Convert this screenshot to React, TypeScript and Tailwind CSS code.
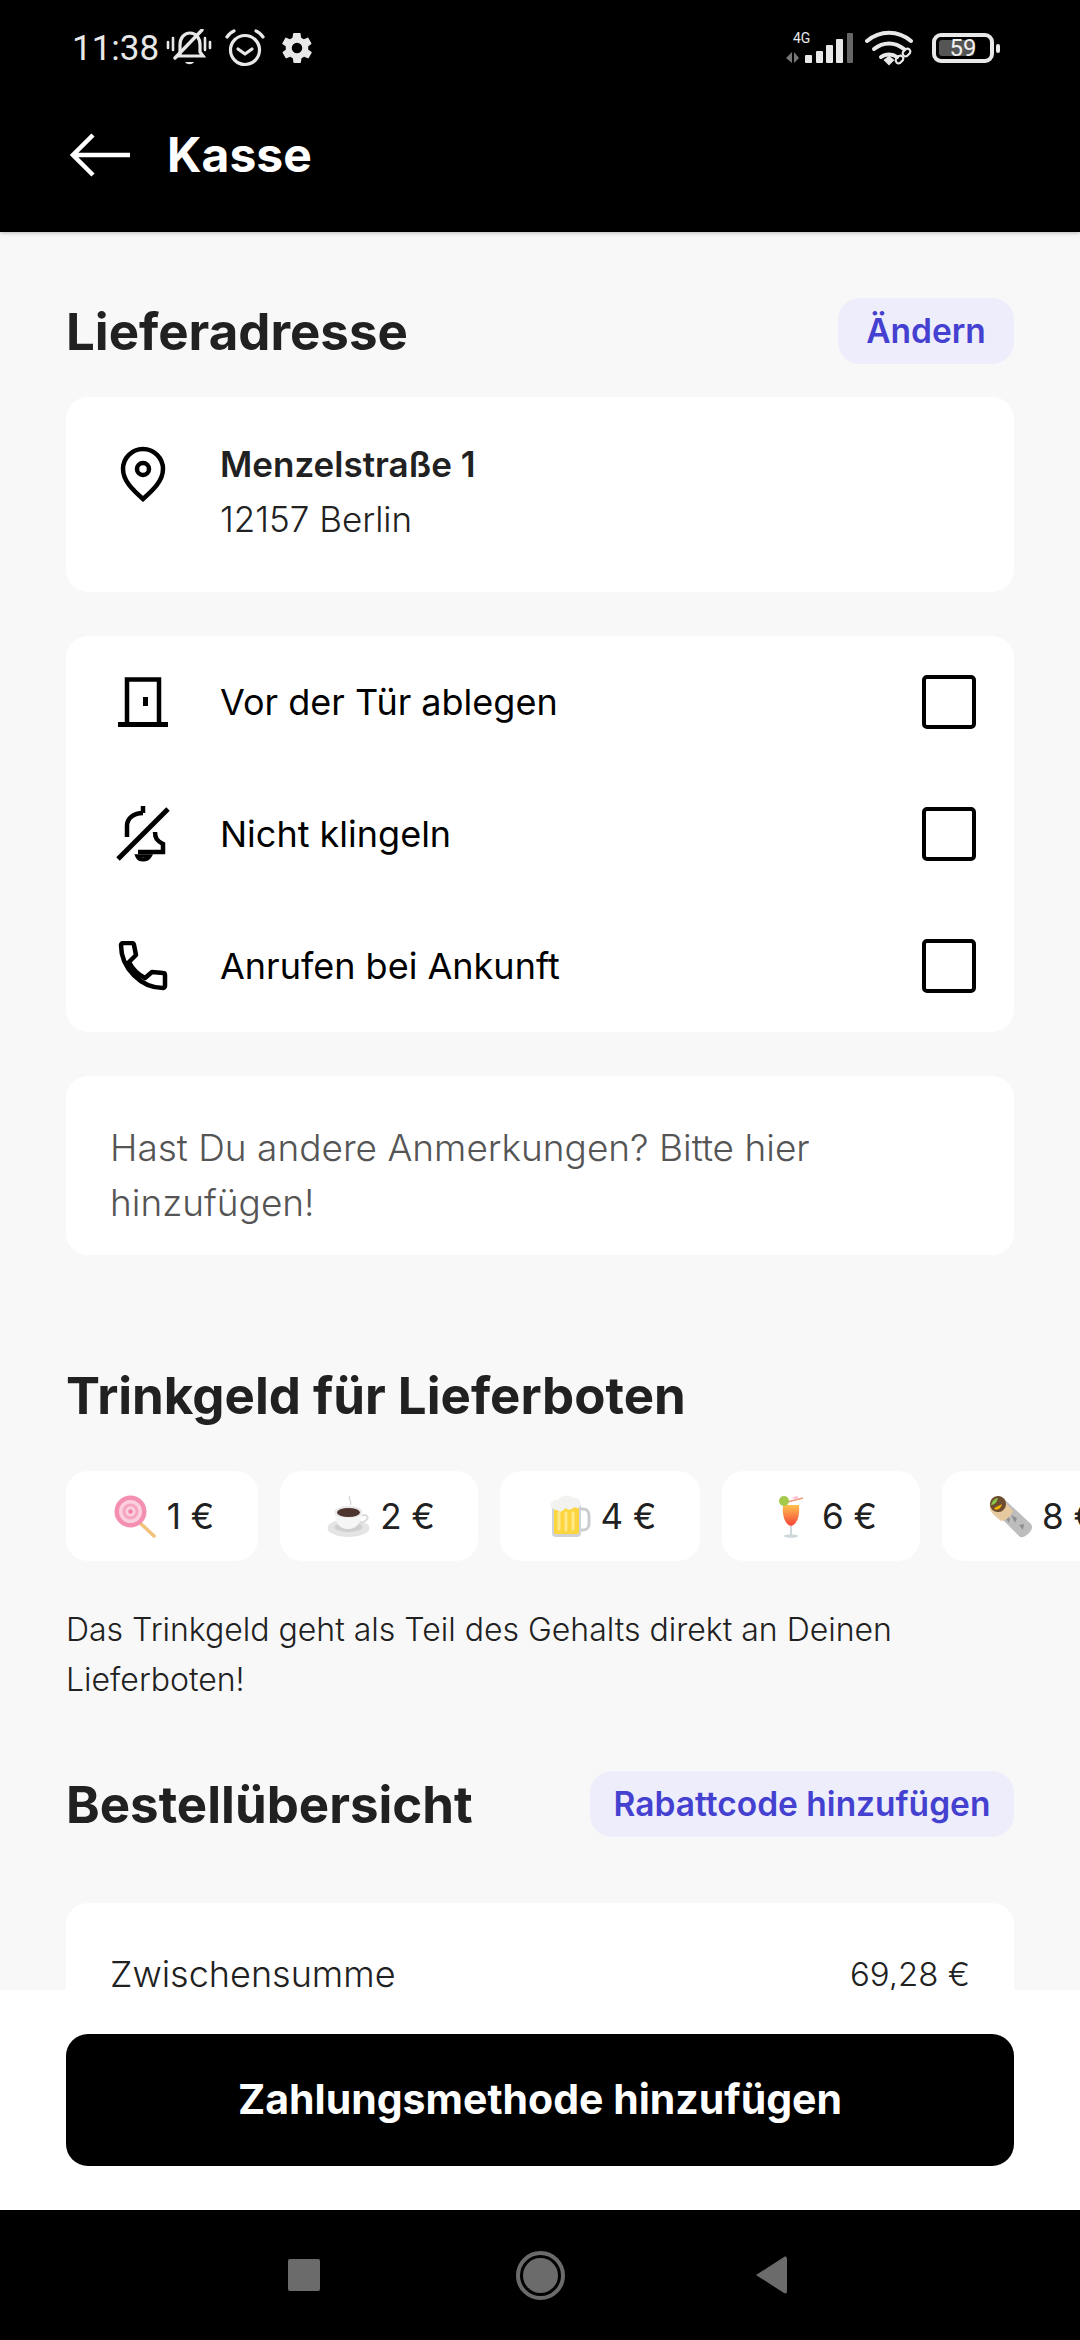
import type { ReactNode } from 'react'

function StatusBar() {
  return (
    <div className="h-[96px] flex items-center justify-between pl-[72px] pr-[80px] font-['Roboto',sans-serif] text-[#e8e8e8]">
      <div className="flex items-center">
        <span className="text-[35px] leading-none">11:38</span>
        <svg className="ml-[7px]" width="46" height="38" viewBox="0 0 46 38" fill="none" stroke="#e8e8e8" strokeWidth="3.2" strokeLinecap="round">
          <path d="M14 26V16c0-7 4-12 10-12s10 5 10 12v7l3 4H12" />
          <path d="M9 29 36 1" strokeWidth="3.4" />
          <path d="M19 33c2 3 7 3 9 0z" fill="#e8e8e8" stroke="none" />
          <path d="M2 13v6M7 9v12M39 9v12M44 13v6" strokeWidth="2.6" />
        </svg>
        <svg className="ml-[13px]" width="40" height="38" viewBox="0 0 40 38" fill="none" stroke="#e8e8e8" strokeWidth="3.2" strokeLinecap="round" strokeLinejoin="round">
          <circle cx="20" cy="21" r="14.5" />
          <path d="M13 20l7 5 7-5" />
          <path d="M2 8c2-3 4-5 7-6M38 8c-2-3-4-5-7-6" />
        </svg>
        <svg className="ml-[14px]" width="36" height="36" viewBox="0 0 24 24" fill="#e8e8e8">
          <path fillRule="evenodd" d="M19.4 13c.1-.3.1-.7.1-1s0-.7-.1-1l2.100-1.600c.2-.2.2-.4.1-.6l-2-3.500c-.1-.2-.4-.3-.6-.2l-2.500 1c-.5-.4-1.100-.7-1.700-1l-.4-2.600c0-.3-.2-.5-.5-.5h-4c-.3 0-.5.2-.5.5l-.4 2.600c-.6.300-1.200.600-1.700 1l-2.500-1c-.2-.1-.5 0-.6.2l-2 3.500c-.1.200-.1.500.1.600L4.600 11c-.1.300-.1.700-.1 1s0 .7.100 1l-2.100 1.600c-.2.200-.2.400-.1.600l2 3.500c.1.200.4.300.6.200l2.500-1c.5.400 1.100.700 1.700 1l.4 2.600c0 .3.200.5.500.5h4c.3 0 .5-.2.5-.5l.4-2.600c.6-.3 1.200-.6 1.700-1l2.500 1c.2.1.5 0 .6-.2l2-3.500c.1-.2.1-.4-.1-.6zM12 15.500a3.500 3.500 0 1 1 0-7 3.500 3.500 0 0 1 0 7z" />
        </svg>
      </div>
      <div className="flex items-center">
        <svg width="68" height="36" viewBox="0 0 68 36">
          <text x="7" y="13" fontSize="14" fill="#e8e8e8" fontFamily="Roboto, sans-serif">4G</text>
          <path d="M0 28l6-6v11zM8 22v11l5-5z" fill="#777" />
          <rect x="19" y="25" width="7" height="8" rx="1" fill="#e8e8e8" />
          <rect x="30" y="21" width="7" height="12" rx="1" fill="#e8e8e8" />
          <rect x="40" y="15" width="7" height="18" rx="1" fill="#e8e8e8" />
          <rect x="50" y="9" width="7" height="24" rx="1" fill="#e8e8e8" />
          <rect x="61" y="3" width="6" height="30" rx="1" fill="#666" />
        </svg>
        <svg className="ml-[11px]" width="52" height="36" viewBox="0 0 52 36" fill="none" stroke="#e8e8e8" strokeLinecap="round">
          <path d="M2 11c13-11 31-11 44 0" strokeWidth="4" />
          <path d="M9 19c9-7.500 21-7.500 30 0" strokeWidth="4" />
          <path d="M16 27c4.500-3.500 11.500-3.500 16 0" strokeWidth="4" />
          <path d="M20 30l4-3 4 3-4 4z" fill="#e8e8e8" strokeWidth="2" />
          <g strokeWidth="2.200">
            <path d="M35 33l3-3a3 3 0 0 0-4-4l-3 3a3 3 0 0 0 4 4z" />
            <path d="M42 26l3-3a3 3 0 0 0-4-4l-3 3a3 3 0 0 0 4 4z" />
          </g>
        </svg>
        <div className="ml-[15px] relative w-[62px] h-[30px] rounded-[9px] border-[4px] border-[#e8e8e8] flex items-center justify-center">
          <div className="absolute left-[3px] top-[3px] bottom-[3px] w-[35px] rounded-[3px] bg-[#555]" />
          <span className="relative text-[24px] leading-none text-[#f0f0f0]">59</span>
        </div>
        <div className="ml-[2px] w-[4px] h-[9px] rounded-[2px] bg-[#e8e8e8]" />
      </div>
    </div>
  )
}

function PinIcon() {
  return (
    <svg width="46" height="56" viewBox="0 0 46 56" fill="none" stroke="#000" strokeWidth="4.500">
      <path d="M23 53C13 44 3 35 3 23a20 20 0 0 1 40 0c0 12-10 21-20 30z" strokeLinejoin="miter" />
      <circle cx="23" cy="23" r="6" />
    </svg>
  )
}

function DoorIcon() {
  return (
    <svg width="50" height="50" viewBox="0 0 50 50" fill="none" stroke="#000" strokeWidth="4.500">
      <path d="M9 47V2.500h32V47" />
      <path d="M0 47.500h50" strokeWidth="5" />
      <rect x="25" y="20" width="5" height="9" fill="#000" stroke="none" />
    </svg>
  )
}

function BellOffIcon() {
  return (
    <svg width="54" height="56" viewBox="0 0 54 56" fill="none" stroke="#000" strokeWidth="4.500">
      <path d="M2 53 52 3" strokeWidth="5" />
      <path d="M27 0v7" />
      <path d="M11 31V20c0-8 7-13 16-13" />
      <path d="M39 26c0 6 2 9 8 12v8H22" />
      <path d="M21 50c2 5 10 5 13 0z" strokeWidth="3.500" />
    </svg>
  )
}

function PhoneIcon() {
  return (
    <svg width="50" height="50" viewBox="0 0 50 50" fill="none" stroke="#000" strokeWidth="4.500" strokeLinejoin="round">
      <path d="M3 4c0-1 1-2 2-2h9c1 0 2 1 2 2l2 10-7 7c4 8 8 12 16 16l7-6 11 1c2 0 2 1 2 2v11c0 1-1 2-2 2C23 47 3 27 3 4z" />
    </svg>
  )
}

function Lollipop() {
  return (
    <svg width="43" height="43" viewBox="0 0 43 43">
      <path d="M24 26 40 41" stroke="#f2c27c" strokeWidth="3.500" strokeLinecap="round" />
      <circle cx="16.500" cy="16.500" r="16" fill="#f48fb1" />
      <circle cx="16.500" cy="16.500" r="11.500" fill="#fbd0de" />
      <circle cx="16.500" cy="16.500" r="8" fill="#f6a5bf" />
      <circle cx="16.500" cy="16.500" r="5" fill="#fbd0de" />
      <circle cx="16.500" cy="16.500" r="2.200" fill="#ee80a5" />
    </svg>
  )
}

function Coffee() {
  return (
    <svg width="43" height="43" viewBox="0 0 43 43">
      <path d="M23 1c-3 3 3 5 0 9" stroke="#dcdcdc" strokeWidth="1.500" fill="none" />
      <ellipse cx="21.500" cy="33" rx="21" ry="9" fill="#e4e4e4" />
      <ellipse cx="21.500" cy="32" rx="14" ry="5" fill="#cfcfcf" />
      <path d="M35 21c5-3 8 2 3 5l-5 3" stroke="#dadada" strokeWidth="2" fill="none" />
      <path d="M8 17c0 12 5 17 13 17s13-5 14-17z" fill="#f5f5f5" />
      <ellipse cx="21.500" cy="17" rx="14" ry="6" fill="#e8e8e8" />
      <ellipse cx="21.500" cy="17.500" rx="11.500" ry="4.500" fill="#4e342e" />
    </svg>
  )
}

function Beer() {
  return (
    <svg width="43" height="43" viewBox="0 0 43 43">
      <path d="M31 14h4c4 0 6 3 6 6v9c0 4-3 6-6 6h-4" fill="none" stroke="#c9cdd0" strokeWidth="3" />
      <rect x="4" y="8" width="29" height="34" rx="4" fill="#cfd3d6" />
      <rect x="6" y="12" width="25" height="27" rx="2" fill="#fcd53f" />
      <path d="M11 18v16M18 18v17M25 18v16" stroke="#ffe98a" strokeWidth="3" strokeLinecap="round" />
      <path d="M3 12c-2-5 3-8 7-7 2-5 12-6 15-2 5-1 9 3 7 8-1 3-4 2-6 1-2 3-6 4-8 1-3 2-5 6-9 2-2 0-5-1-6-3z" fill="#f2f2f0" />
    </svg>
  )
}

function Cocktail() {
  return (
    <svg width="43" height="43" viewBox="-10 0 43 43">
      <defs>
        <linearGradient id="drink" x1="0" y1="0" x2="0" y2="1">
          <stop offset="0" stopColor="#ffc24d" />
          <stop offset="1" stopColor="#f4433a" />
        </linearGradient>
      </defs>
      <path d="M4 10c-1 9 1 19 8 21 7-2 9-12 8-21z" fill="url(#drink)" />
      <path d="M12 31v9" stroke="#cfd8dc" strokeWidth="2" />
      <ellipse cx="12" cy="41" rx="7" ry="1.800" fill="#cfd8dc" />
      <path d="M8 7 24 3" stroke="#ef9a7a" strokeWidth="1.500" />
      <path d="M12 3l6-2 2 3z" fill="#f8bbd0" />
      <circle cx="5" cy="6" r="5" fill="#a5c94b" />
    </svg>
  )
}

function Burrito() {
  return (
    <svg width="43" height="43" viewBox="0 0 43 43">
      <path d="M14 3 42 29c2 3 1 6-2 9s-6 5-9 4L5 16z" fill="#bdbdbd" />
      <path d="M22 20l6 3-2 5zM30 30l5-1-1 6zM16 22l5 1-1 5z" fill="#8f8f8f" />
      <path d="M1 9c-1 4 1 8 4 11l7 6c6-1 10-5 12-10L16 7C11 1 3 2 1 9z" fill="#e7c9a0" />
      <ellipse cx="9" cy="9" rx="8" ry="8" fill="#6d4c2f" transform="rotate(-40 9 9)" />
      <path d="M2 10c1-4 4-7 7-7-1 4-3 7-7 7z" fill="#8bc34a" />
      <path d="M5 14c2-3 5-3 8-5-1 4-4 7-8 5z" fill="#f4b400" />
    </svg>
  )
}

function OptionRow({ icon, label }: { icon: ReactNode; label: string }) {
  return (
    <div className="h-[132px] flex items-center">
      <div className="w-[66px] flex justify-center shrink-0">{icon}</div>
      <span className="ml-[44px] flex-1 text-[36px] text-black">{label}</span>
      <div className="w-[54px] h-[54px] border-[4.5px] border-black rounded-[5px] mr-[38px]" />
    </div>
  )
}

function SectionHeader({ title, action, actionWidth }: { title: string; action?: string; actionWidth?: string }) {
  return (
    <div className="h-[66px] flex items-center justify-between">
      <h2 className="text-[51px] font-bold text-[#212121] leading-none">{title}</h2>
      {action && (
        <button className={`${actionWidth} h-[66px] rounded-[22px] bg-[#eeedfb] text-[#4541d0] text-[33.5px] font-semibold`}>
          {action}
        </button>
      )}
    </div>
  )
}

const tips = [
  { icon: <Lollipop />, label: '1 €', width: 'w-[192px]' },
  { icon: <Coffee />, label: '2 €', width: 'w-[198px]' },
  { icon: <Beer />, label: '4 €', width: 'w-[200px]' },
  { icon: <Cocktail />, label: '6 €', width: 'w-[198px]' },
  { icon: <Burrito />, label: '8 €', width: 'w-[198px]' },
]

export default function App() {
  return (
    <div className="w-[1080px] h-[2340px] flex flex-col overflow-hidden bg-[#f8f8f8] font-['Inter',sans-serif]">
      {/* Top bar */}
      <header className="h-[232px] bg-black shrink-0 relative z-10 shadow-[0_1px_4px_rgba(0,0,0,0.25)]">
        <StatusBar />
        <div className="h-[118px] flex items-center pl-[70px]">
          <svg width="60" height="44" viewBox="0 0 60 44" fill="none" stroke="#fff" strokeWidth="4.500">
            <path d="M60 22H3M23 2 3 22l20 20" />
          </svg>
          <h1 className="ml-[37px] text-[48px] font-bold text-white leading-none">Kasse</h1>
        </div>
      </header>

      <main className="flex-1 min-h-0 overflow-hidden px-[66px] pt-[66px]">
        <SectionHeader title="Lieferadresse" action="Ändern" actionWidth="w-[176px]" />

        <div className="mt-[33px] h-[195px] rounded-[22px] bg-white flex pl-[44px] pt-[40px]">
          <div className="w-[66px] flex justify-center shrink-0 pt-[9px]">
            <PinIcon />
          </div>
          <div className="ml-[44px] text-[35px] leading-[55px] text-[#212121]">
            <p className="font-semibold">Menzelstraße 1</p>
            <p className="font-light">12157 Berlin</p>
          </div>
        </div>

        <div className="mt-[44px] rounded-[22px] bg-white pl-[44px]">
          <OptionRow icon={<DoorIcon />} label="Vor der Tür ablegen" />
          <OptionRow icon={<BellOffIcon />} label="Nicht klingeln" />
          <OptionRow icon={<PhoneIcon />} label="Anrufen bei Ankunft" />
        </div>

        <div className="mt-[44px] h-[179px] rounded-[22px] bg-white px-[44px] pt-[44px] text-[37px] leading-[55px] font-light text-[#555]">
          Hast Du andere Anmerkungen? Bitte hier hinzufügen!
        </div>

        <div className="mt-[107px]">
          <SectionHeader title="Trinkgeld für Lieferboten" />
        </div>

        <div className="mt-[43px] -mr-[66px] flex gap-[22px] overflow-hidden">
          {tips.map((tip) => (
            <div
              key={tip.label}
              className={`${tip.width} h-[90px] shrink-0 rounded-[22px] bg-white flex items-center justify-center gap-[10px] pl-[4px] text-[35px] text-[#212121]`}
            >
              {tip.icon}
              <span>{tip.label}</span>
            </div>
          ))}
        </div>

        <p className="mt-[44px] text-[32px] leading-[50px] text-[#212121] font-light">
          Das Trinkgeld geht als Teil des Gehalts direkt an Deinen Lieferboten!
        </p>

        <div className="mt-[66px]">
          <SectionHeader title="Bestellübersicht" action="Rabattcode hinzufügen" actionWidth="w-[424px]" />
        </div>

        <div className="mt-[66px] rounded-t-[22px] bg-white h-[200px] px-[44px] pt-[44px] flex justify-between text-[36px] leading-[55px] font-light text-[#212121]">
          <span>Zwischensumme</span>
          <span className="text-[33px]">69,28 €</span>
        </div>
      </main>

      {/* Bottom action */}
      <div className="h-[220px] bg-white shrink-0 relative z-10 px-[66px] pt-[44px]">
        <button className="w-full h-[132px] rounded-[22px] bg-black text-white text-[41px] font-bold">
          Zahlungsmethode hinzufügen
        </button>
      </div>

      {/* Android nav bar */}
      <div className="h-[130px] bg-black shrink-0 relative z-10 flex items-center justify-center">
        <div className="flex items-center mr-[5px]">
          <div className="w-[32px] h-[32px] rounded-[2px] bg-[#6b6b6b]" />
          <div className="ml-[196px] w-[49px] h-[49px] rounded-full border-[4px] border-[#6b6b6b] p-[3px]">
            <div className="w-full h-full rounded-full bg-[#6b6b6b]" />
          </div>
          <svg className="ml-[190px]" width="32" height="38" viewBox="0 0 32 38">
            <path d="M1 19 29 1c2-1 3 0 3 2v32c0 2-1 3-3 2z" fill="#6b6b6b" />
          </svg>
        </div>
      </div>
    </div>
  )
}
